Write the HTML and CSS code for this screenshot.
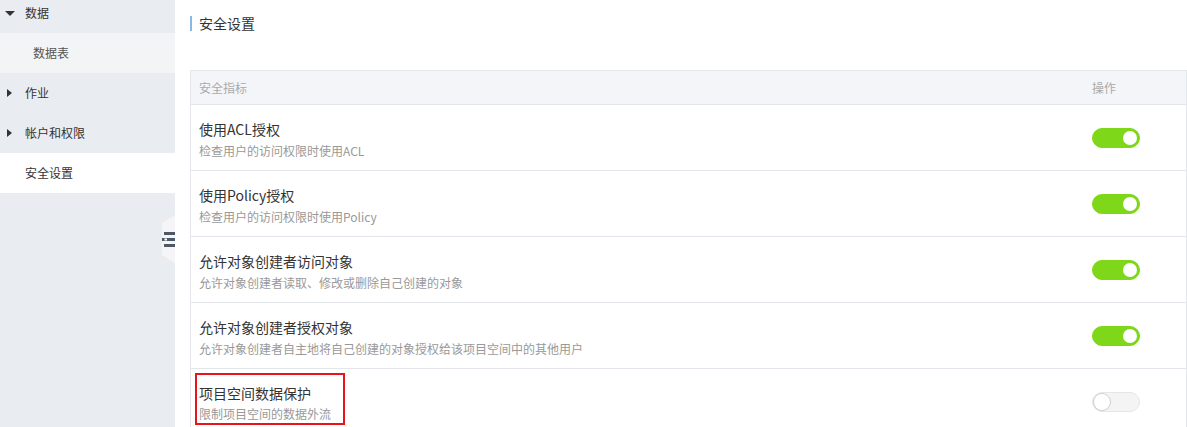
FILE: index.html
```html
<!DOCTYPE html>
<html>
	<head>
		<meta charset="utf-8" />
		<title>安全设置</title>
		<link rel="stylesheet" href="styles.css">
	</head>
	<body>
		<div class="side">
			<div class="menu open"><i class="arr down"></i>数据</div>
			<div class="sub">数据表</div>
			<div class="menu"><i class="arr"></i>作业</div>
			<div class="menu"><i class="arr"></i>帐户和权限</div>
			<div class="menu on">安全设置</div>
			<div class="fold">
				<span class="bar"></span>
				<span class="bar short"></span>
				<span class="bar"></span>
			</div>
		</div>
		<div class="main">
			<h2 class="title">安全设置</h2>
			<div class="table">
				<div class="row head">
					<div class="cell">安全指标</div>
					<div class="cell op">操作</div>
				</div>
				<div class="row">
					<div class="cell">
						<p class="name">使用ACL授权</p>
						<p class="desc">检查用户的访问权限时使用ACL</p>
					</div>
					<div class="cell op"><span class="switch on"></span></div>
				</div>
				<div class="row">
					<div class="cell">
						<p class="name">使用Policy授权</p>
						<p class="desc">检查用户的访问权限时使用Policy</p>
					</div>
					<div class="cell op"><span class="switch on"></span></div>
				</div>
				<div class="row">
					<div class="cell">
						<p class="name">允许对象创建者访问对象</p>
						<p class="desc">允许对象创建者读取、修改或删除自己创建的对象</p>
					</div>
					<div class="cell op"><span class="switch on"></span></div>
				</div>
				<div class="row">
					<div class="cell">
						<p class="name">允许对象创建者授权对象</p>
						<p class="desc">允许对象创建者自主地将自己创建的对象授权给该项目空间中的其他用户</p>
					</div>
					<div class="cell op"><span class="switch on"></span></div>
				</div>
				<div class="row">
					<div class="cell">
						<div class="mark">
							<p class="name">项目空间数据保护</p>
							<p class="desc">限制项目空间的数据外流</p>
						</div>
					</div>
					<div class="cell op"><span class="switch"></span></div>
				</div>
			</div>
		</div>
	</body>
</html>
```

FILE: styles.css
```css
*{
	margin:0;
	padding:0;
	box-sizing:border-box;
}
body{
	display:flex;
	height:100vh;
	overflow:hidden;
	background:#fff;
	font-family:"Noto Sans CJK SC","Liberation Sans",sans-serif;
	color:#333;
}
.side{
	position:relative;
	width:175px;
	flex-shrink:0;
	margin-top:-7px;
	background:#e9ecf0;
}
.menu,.sub{
	height:40px;
	line-height:40px;
	font-size:12px;
	padding-left:25px;
	position:relative;
}
.sub{
	padding-left:33px;
	background:#f3f4f6;
	color:#555;
}
.menu.on{
	background:#fff;
}
.arr{
	position:absolute;
	left:7px;
	top:16px;
	border-left:5px solid #333;
	border-top:4px solid transparent;
	border-bottom:4px solid transparent;
}
.arr.down{
	left:5px;
	top:18px;
	border-top:5px solid #333;
	border-left:5px solid transparent;
	border-right:5px solid transparent;
	border-bottom:0;
}
.fold{
	position:absolute;
	right:0;
	top:222px;
	width:13px;
	height:48px;
	background:#f5f5f7;
	clip-path:polygon(100% 0,0 17%,0 83%,100% 100%);
	display:flex;
	flex-direction:column;
	justify-content:center;
	align-items:flex-end;
	gap:3px;
}
.bar{
	display:block;
	width:11px;
	height:3px;
	background:#4d5869;
}
.bar.short{
	width:8px;
	box-shadow:-3px 0 0 -0.5px #fff,-5px 0 0 #4d5869;
}
.main{
	flex:1;
	padding:16px 0 0 15px;
}
.title{
	font-size:14px;
	font-weight:normal;
	line-height:15px;
	border-left:2px solid #8ab8e0;
	padding-left:7px;
	color:#333;
	margin-bottom:39px;
}
.table{
	border:1px solid #e3e6eb;
	border-bottom:0;
}
.row{
	display:flex;
	height:66px;
	border-bottom:1px solid #e3e6eb;
}
.row.head{
	height:34px;
	background:#f4f5f9;
	color:#aaa;
	font-size:12px;
}
.row.head .cell{
	line-height:33px;
}
.cell{
	flex:1;
	padding:14px 8px 0;
}
.row.head .cell{
	padding-top:0;
}
.cell.op{
	flex:0 0 102px;
	padding-top:0;
	display:flex;
	align-items:center;
}
.row.head .cell.op{
	display:block;
}
.name{
	font-size:14px;
	line-height:20px;
	color:#333;
}
.desc{
	font-size:12px;
	line-height:18px;
	margin-top:3px;
	color:#999;
}
.mark{
	display:inline-block;
	border:2px solid #e8141c;
	margin:-10px 0 0 -4px;
	padding:8px 2px 1px 2px;
	width:150px;
	height:52px;
}
.mark .desc{
	margin-top:2px;
}
.switch{
	position:relative;
	display:block;
	width:48px;
	height:20px;
	border-radius:10px;
	background:#f4f4f4;
	border:1px solid #e6e6e6;
}
.switch:after{
	content:"";
	position:absolute;
	left:1px;
	top:1px;
	width:16px;
	height:16px;
	border-radius:50%;
	background:#fff;
	box-shadow:0 0 0 1px #cfcfcf;
}
.switch.on{
	background:#7ed819;
	border-color:#7ed819;
}
.switch.on:after{
	left:auto;
	right:2px;
	top:2px;
	width:14px;
	height:14px;
	box-shadow:none;
}
```
